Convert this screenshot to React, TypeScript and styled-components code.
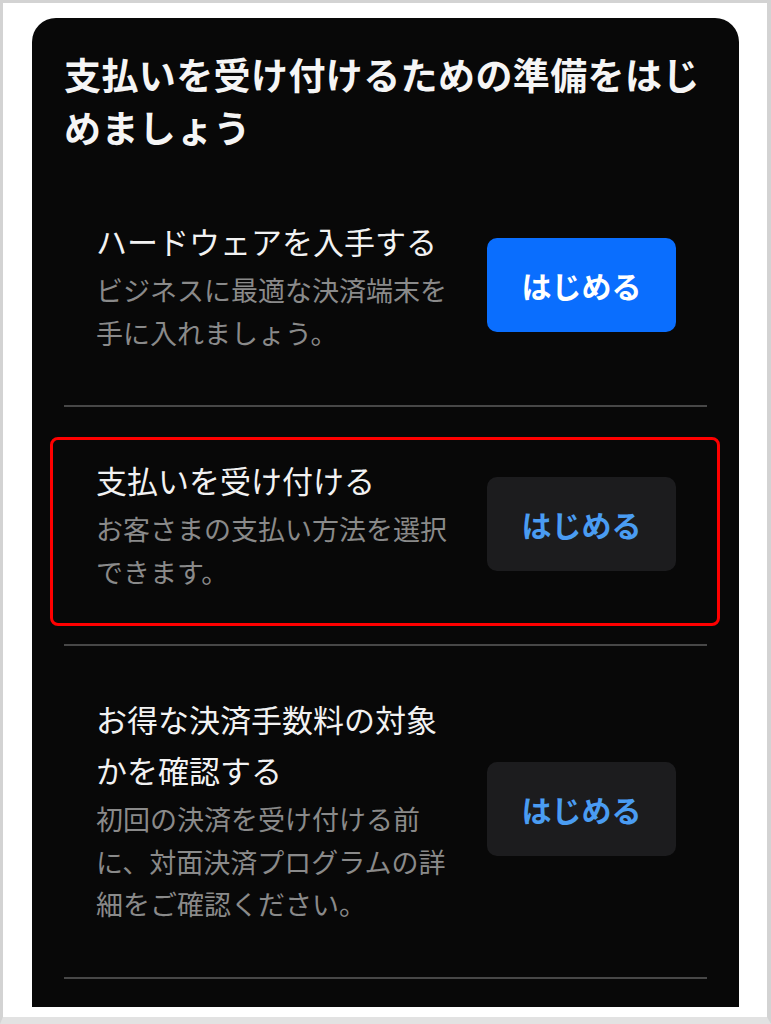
import React from 'react';
import styled, { createGlobalStyle } from 'styled-components';

const GlobalStyle = createGlobalStyle`
  html, body {
    margin: 0;
    padding: 0;
    background: #ffffff;
  }
  * {
    box-sizing: border-box;
  }
`;

type Step = {
  title: string;
  description: string;
  primary?: boolean;
  highlighted?: boolean;
};

const steps: Step[] = [
  {
    title: 'ハードウェアを入手する',
    description: 'ビジネスに最適な決済端末を手に入れましょう。',
    primary: true,
  },
  {
    title: '支払いを受け付ける',
    description: 'お客さまの支払い方法を選択できます。',
    highlighted: true,
  },
  {
    title: 'お得な決済手数料の対象かを確認する',
    description: '初回の決済を受け付ける前に、対面決済プログラムの詳細をご確認ください。',
  },
];

export default function App() {
  return (
    <>
      <GlobalStyle />
      <Frame>
        <Card>
          <Heading>支払いを受け付けるための準備をはじめましょう</Heading>
          <StepList>
            {steps.map((step) => (
              <StepRow key={step.title} highlighted={step.highlighted}>
                <StepText>
                  <StepTitle>{step.title}</StepTitle>
                  <StepDescription>{step.description}</StepDescription>
                </StepText>
                <StartButton primary={step.primary}>はじめる</StartButton>
              </StepRow>
            ))}
          </StepList>
        </Card>
      </Frame>
    </>
  );
}

const Frame = styled.div`
  width: 771px;
  height: 1024px;
  overflow: hidden;
  background: #ffffff;
  border: 3px solid #d3d3d3;
  border-right-width: 4px;
  border-bottom: 7px solid #e2e2e2;
  padding: 15px 28px 0 29px;
  font-family: 'Noto Sans CJK JP', 'Noto Sans', sans-serif;
`;

const Card = styled.section`
  background: #080808;
  border-radius: 24px 24px 0 0;
  padding: 30px 32px 28px;
`;

const Heading = styled.h1`
  margin: 0 0 14px;
  color: #f5f5f5;
  font-size: 37px;
  font-weight: 700;
  line-height: 53px;
  letter-spacing: 0.4px;
`;

const StepList = styled.div`
  display: flex;
  flex-direction: column;
`;

const StepRow = styled.div<{ highlighted?: boolean }>`
  position: relative;
  display: flex;
  align-items: center;
  gap: 30px;
  padding: 47px 31px 51px 32px;
  border-bottom: 2px solid #474747;

  ${(props) =>
    props.highlighted &&
    `
    &::after {
      content: '';
      position: absolute;
      top: 30px;
      bottom: 18px;
      left: -14px;
      right: -13px;
      border: 3px solid #ff0000;
      border-radius: 8px;
      pointer-events: none;
    }
  `}
`;

const StepText = styled.div`
  flex: 1;
  min-width: 0;
`;

const StepTitle = styled.div`
  color: #f2f2f2;
  font-size: 31px;
  font-weight: 400;
  line-height: 51px;
  margin-bottom: 3px;
`;

const StepDescription = styled.div`
  color: #8a8a8a;
  font-size: 27px;
  font-weight: 400;
  line-height: 42.5px;
`;

const StartButton = styled.button<{ primary?: boolean }>`
  flex-shrink: 0;
  width: 189px;
  height: 94px;
  border: none;
  border-radius: 10px;
  background: ${(props) => (props.primary ? '#0a6efe' : '#1c1c1e')};
  color: ${(props) => (props.primary ? '#ffffff' : '#4a9cf2')};
  font-family: inherit;
  font-size: 30px;
  font-weight: 700;
  cursor: pointer;
`;
